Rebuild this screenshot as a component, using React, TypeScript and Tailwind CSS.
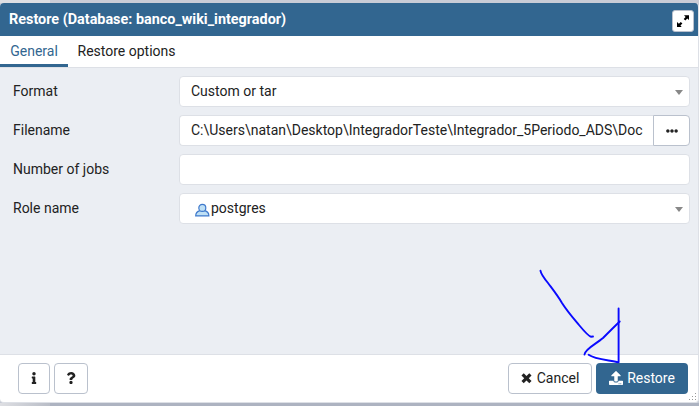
import React from "react";
import { FaEllipsisH, FaInfo, FaQuestion, FaUpload } from "react-icons/fa";

const fieldBox =
  "flex h-[31px] min-w-0 flex-1 items-center rounded border border-[#dde0e6] bg-white pb-px pl-[11px] pr-[6px]";

function Row({ label, children }: { label: string; children: React.ReactNode }) {
  return (
    <div className="flex h-[31px]">
      <div className="w-[166px] shrink-0 leading-[30px]">{label}</div>
      {children}
    </div>
  );
}

function Caret() {
  return (
    <svg className="ml-auto mt-[2px] h-[5px] w-2 shrink-0" viewBox="0 0 8 5">
      <path d="M0 0h8L4 5z" fill="#888" />
    </svg>
  );
}

function UserIcon() {
  return (
    <svg className="ml-1 mr-px mt-[3px] h-[14px] w-[15px] shrink-0" viewBox="0 0 15 14">
      <path
        d="M.7 12.900C.7 10.500 2.300 8.400 5 7.700h4.600c2.700.700 4.300 2.800 4.300 5.200z"
        fill="#bfe0f5"
        stroke="#3f79cc"
        strokeWidth="1.200"
      />
      <circle cx="7.300" cy="4.900" r="3.500" fill="#bfe0f5" stroke="#3f79cc" strokeWidth="1.200" />
    </svg>
  );
}

function ExpandIcon() {
  return (
    <svg className="h-[14px] w-[14px]" viewBox="0 0 14 14" fill="#000">
      <path d="M8 1.300H13V6L11.300 4.600 9.300 6.500 7.700 4.900 9.600 3z" />
      <path d="M1 8v5h4.700L4.400 11.400l2-1.900L4.800 7.900 2.900 9.800z" />
    </svg>
  );
}

function CrossIcon() {
  return (
    <svg className="h-[14px] w-[11px]" viewBox="0 0 11 14" stroke="currentColor" strokeWidth="3.200">
      <path d="M1.600 3.300l7.800 7.800M9.400 3.300l-7.800 7.800" />
    </svg>
  );
}

function ArrowSketch() {
  return (
    <svg
      className="pointer-events-none absolute left-[520px] top-[260px] h-[110px] w-[120px]"
      viewBox="0 0 120 110"
      fill="none"
      stroke="#0a0aff"
      strokeWidth="1.900"
      strokeLinecap="round"
      strokeLinejoin="round"
    >
      <path d="M20.500 10.800C21 14 24 18 28 23C34 31 38 36 42 43C47 51 54 59 59 65C64 71 69 76.500 71 76.700L73 76.500" />
      <path d="M98.600 48.500V102.300C89 100 75 99.500 68.600 94.800" />
      <path d="M99.700 61.500C94 67 88 73 83 78C76 84 65 89 64.500 94.500" />
    </svg>
  );
}

export default function App() {
  return (
    <div className="relative h-[406px] w-[699px] overflow-hidden bg-[#c6cad5] font-[Roboto,sans-serif] text-sm text-[#222]">
      <div className="flex h-[3px]">
        <div className="w-[50px] bg-[#dedfe3]" />
        <div className="flex-1 bg-[#c9ccd6]" />
      </div>
      <div className="flex h-[400px] w-[699px] flex-col overflow-hidden rounded border-b border-r border-[#dde0e6] bg-white">
        <header className="-mr-px flex h-[33px] shrink-0 items-center justify-between bg-[#326690] pl-[9px] pr-[5px] font-bold text-white">
          <span className="pt-px text-[14.400px]">Restore (Database: banco_wiki_integrador)</span>
          <button className="mt-[3px] flex h-[22px] w-[22px] items-center justify-center rounded-[3px] border border-[#bac1cd] bg-white">
            <ExpandIcon />
          </button>
        </header>
        <nav className="flex h-8 shrink-0 border-b border-[#dde0e6]">
          <div className="flex h-[31px] w-[68px] justify-center border-b-[3px] border-[#326690] leading-[30px] text-[#326690]">
            General
          </div>
          <div className="pl-[9.500px] leading-[30px]">Restore options</div>
        </nav>
        <main className="flex flex-1 flex-col gap-2 bg-[#ebeef3] pl-[13px] pr-2 pt-2">
          <Row label="Format">
            <div className={fieldBox}>
              Custom or tar
              <Caret />
            </div>
          </Row>
          <Row label="Filename">
            <div className="flex min-w-0 flex-1">
              <div className="flex min-w-0 flex-1 items-center rounded-l border border-r-0 border-[#dde0e6] bg-white pb-px pl-[11px]">
                <span className="whitespace-nowrap">
                  C:\Users\natan\Desktop\IntegradorTeste\Integrador_5Periodo_ADS\Doc
                </span>
              </div>
              <button className="flex w-[37px] items-center justify-center rounded-r border border-[#bac1cd] bg-white">
                <FaEllipsisH size={12} />
              </button>
            </div>
          </Row>
          <Row label="Number of jobs">
            <div className={fieldBox} />
          </Row>
          <Row label="Role name">
            <div className={fieldBox}>
              <UserIcon />
              postgres
              <Caret />
            </div>
          </Row>
        </main>
        <footer className="flex h-12 shrink-0 items-start border-t border-[#dde0e6] pl-[18px] pr-[10px] pt-2">
          <button className="flex h-[31px] w-8 items-center justify-center rounded border border-[#bac1cd] pb-[2px]">
            <FaInfo size={12} />
          </button>
          <button className="ml-1 flex h-[31px] w-[34px] items-center justify-center rounded border border-[#bac1cd] pb-[2px]">
            <FaQuestion size={12} />
          </button>
          <button className="ml-auto flex h-[31px] w-[84px] items-center justify-center gap-[5px] rounded border border-[#bac1cd] pb-px">
            <CrossIcon />
            Cancel
          </button>
          <button className="ml-1 flex h-[31px] w-[92px] items-center justify-center gap-1 rounded bg-[#326690] pb-px text-white">
            <FaUpload size={14} className="-mt-px" />
            Restore
          </button>
        </footer>
      </div>
      <div className="flex h-[3px]">
        <div className="w-[50px] bg-gradient-to-r from-[#dedfe3] to-[#b9bdc7]" />
        <div className="flex-1 bg-[#adb3c1]" />
      </div>
      <svg className="absolute left-[689px] top-[393px] h-2 w-2" viewBox="0 0 8 8" fill="#999">
        <path d="M6 0h1v1H6zM3 3h1v1H3zM6 3h1v1H6zM0 6h1v1H0zM3 6h1v1H3zM6 6h1v1H6z" />
      </svg>
      <ArrowSketch />
    </div>
  );
}
